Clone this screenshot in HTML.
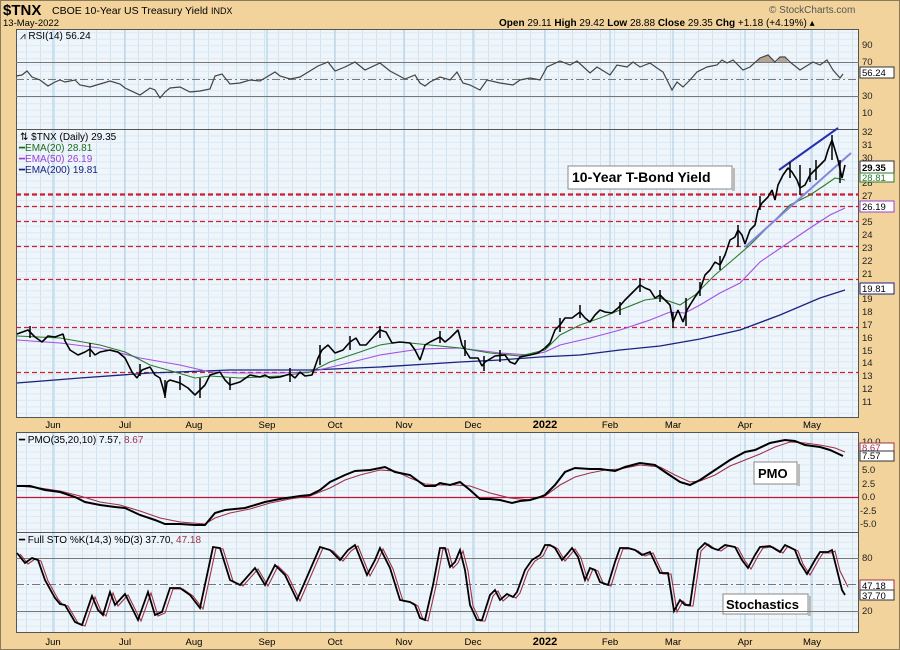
<!DOCTYPE html>
<html><head><meta charset="utf-8"><style>
body{margin:0;background:#f2d39c;width:900px;height:650px;overflow:hidden;font-family:"Liberation Sans",sans-serif}
svg{display:block}
text{font-family:"Liberation Sans",sans-serif}
</style></head><body>
<svg width="900" height="650" viewBox="0 0 900 650" xmlns="http://www.w3.org/2000/svg">
<defs>
<pattern id="g" x="12" y="0" width="14" height="6.45" patternUnits="userSpaceOnUse">
<rect width="14" height="6.45" fill="#eef5fb"/>
<line x1="0.5" y1="0" x2="0.5" y2="6.45" stroke="#d2e3ef" stroke-width="1"/>
<line x1="0" y1="0.5" x2="14" y2="0.5" stroke="#dde9f3" stroke-width="1"/>
</pattern>
</defs>
<rect x="0" y="0" width="900" height="650" fill="#f2d39c"/>
<rect x="0.5" y="0.5" width="899" height="649" fill="none" stroke="#8a7a5a"/>
<rect x="16" y="29" width="843" height="389" fill="url(#g)"/>
<rect x="16" y="432" width="843" height="201" fill="url(#g)"/>
<g stroke="#a9cde2" stroke-width="1">
<path d="M53 29V418M125 29V418M194 29V418M267 29V418M335 29V418M404 29V418M473 29V418M545 29V418M610 29V418M673 29V418M745 29V418M812 29V418"/>
<path d="M53 432V633M125 432V633M194 432V633M267 432V633M335 432V633M404 432V633M473 432V633M545 432V633M610 432V633M673 432V633M745 432V633M812 432V633"/>
</g>
<g fill="none" stroke="#555" stroke-width="1">
<rect x="16.5" y="29.5" width="842" height="388"/>
<line x1="16" y1="129.5" x2="859" y2="129.5"/>
<rect x="16.5" y="432.5" width="842" height="200"/>
<line x1="16" y1="532.5" x2="859" y2="532.5"/>
</g>
<g stroke="#777" stroke-width="1">
<line x1="16" y1="62.5" x2="859" y2="62.5"/>
<line x1="16" y1="96.5" x2="859" y2="96.5"/>
<line x1="16" y1="79.5" x2="859" y2="79.5" stroke-dasharray="8,3,2,3"/>
</g>
<path d="M757,62 L760,58 L768,55 L775,62 Z M777,62 L780,57 L785,57 L788,62 Z" fill="#b5a595"/>
<polyline fill="none" stroke="#444" stroke-width="1.2" points="16,76 22,75 27,71 32,77 40,80 48,86 55,82 60,80 65,82 75,80 80,85 90,87 100,84 110,81 120,84 125,88 140,95 150,88 155,90 160,98 165,92 170,88 180,87 190,92 200,91 210,89 215,76 222,74 230,84 240,83 250,80 260,81 265,78 275,72 280,76 290,79 300,77 318,66 328,62 335,71 345,67 355,62 365,70 380,63 390,71 405,79 415,75 420,83 425,86 430,82 440,77 450,80 457,72 463,83 470,85 480,90 487,80 500,83 513,85 520,80 530,78 540,80 547,67 560,61 570,65 577,61 590,73 597,67 610,75 617,65 627,67 633,62 640,67 650,63 657,68 663,72 672,90 677,82 683,87 690,80 697,72 707,67 717,65 722,60 727,63 733,60 743,70 750,67 760,58 768,55 775,62 780,57 785,57 790,62 800,70 813,62 820,65 827,60 833,70 840,78 843,74"/>
<g stroke="#cc1f2f" stroke-width="1.2" stroke-dasharray="5,3" fill="none">
<line x1="16" y1="194.5" x2="859" y2="194.5" stroke-width="2.2"/>
<line x1="16" y1="206.5" x2="859" y2="206.5"/>
<line x1="16" y1="221.5" x2="859" y2="221.5"/>
<line x1="16" y1="246.5" x2="859" y2="246.5"/>
<line x1="16" y1="279.5" x2="859" y2="279.5"/>
<line x1="16" y1="327.5" x2="859" y2="327.5"/>
<line x1="16" y1="372.5" x2="859" y2="372.5"/>
</g>
<polyline fill="none" stroke="#1a237e" stroke-width="1.3" points="17,383 80,378 150,373 230,370 310,370 380,367 460,362 500,360 540,357 580,355 620,350 660,346 700,339 740,330 780,315 820,298 845,290"/>
<polyline fill="none" stroke="#a64fe0" stroke-width="1.1" points="17,340 60,343 100,348 140,358 180,365 210,372 240,373 280,373 310,372 340,365 380,355 420,349 460,348 500,353 530,355 545,352 560,345 590,338 620,330 650,320 670,312 685,313 700,305 720,293 740,283 760,262 785,245 810,228 830,215 845,208"/>
<polyline fill="none" stroke="#2b7a2b" stroke-width="1.1" points="17,336 60,338 100,345 125,352 150,365 175,372 195,378 210,376 240,378 280,376 310,372 330,362 360,352 380,345 400,342 430,345 460,348 490,353 520,356 545,350 560,335 580,325 600,318 620,310 645,300 660,298 680,305 695,295 715,275 735,258 750,245 770,225 790,205 810,195 825,185 835,178 845,180"/>
<line x1="779" y1="170" x2="838" y2="128" stroke="#2830b0" stroke-width="2"/>
<line x1="745" y1="247" x2="851" y2="153" stroke="#8088dd" stroke-width="2"/>
<polyline fill="none" stroke="#000" stroke-width="1.6" stroke-linejoin="bevel" points="17,334 28,330 35,337 42,342 48,336 55,337 63,334 65,341 70,350 78,355 85,352 90,349 95,355 100,352 110,350 118,352 125,358 132,372 137,378 142,370 150,367 155,375 160,378 163,388 165,396 167,382 170,380 180,383 188,388 195,395 200,390 205,385 210,375 220,372 225,380 230,385 240,382 250,375 260,377 265,375 270,378 280,377 290,374 295,378 300,372 305,376 312,375 318,358 322,350 328,345 335,353 343,350 350,342 356,338 360,345 366,345 375,335 380,330 386,332 392,343 400,342 410,343 415,350 420,360 425,345 430,342 440,337 445,342 450,338 458,330 462,345 465,350 470,358 478,358 482,366 485,362 495,356 505,355 510,362 515,364 520,357 530,355 538,353 545,348 550,343 555,330 560,325 565,318 572,318 580,312 585,318 590,322 595,315 600,310 605,312 612,313 618,308 625,300 630,295 635,290 640,285 645,288 650,290 655,298 660,295 665,300 670,305 673,322 678,310 683,322 687,310 690,305 695,297 700,290 705,275 710,270 715,262 720,265 725,255 730,240 735,237 738,230 742,235 745,244 750,230 755,225 758,210 762,203 768,197 772,190 775,200 778,185 783,175 788,168 792,172 797,180 800,188 805,185 810,175 815,170 820,165 825,160 828,150 832,140 835,150 838,160 842,178 845,165"/>
<g stroke="#000" stroke-width="1.5">
<path d="M165,380V398M200,378V398M320,345V365M465,340V356M484,356V371M673,312V328M686,298V326M738,225V247M800,165V195M832,135V160M840,160V183M816,160V180M30,326V338M90,343V357M140,364V376M180,376V390M230,378V390M290,368V382M350,336V350M380,326V338M440,331V343M500,350V362M560,318V332M580,305V318M620,302V315M640,278V292M660,290V302M700,282V296M720,256V270M760,196V210M790,162V178M810,168V182"/>
</g>
<rect x="568" y="166" width="164" height="23" fill="#fff" stroke="#888"/>
<rect x="732" y="168" width="3" height="23" fill="#bbb"/>
<text x="572" y="182" font-size="14" font-weight="bold" fill="#000">10-Year T-Bond Yield</text>
<rect x="754" y="462" width="43" height="22" fill="#fff" stroke="#888"/>
<rect x="797" y="464" width="3" height="22" fill="#bbb"/>
<text x="758" y="478" font-size="13" font-weight="bold">PMO</text>
<rect x="723" y="594" width="85" height="20" fill="#fff" stroke="#888"/>
<rect x="808" y="596" width="3" height="20" fill="#bbb"/>
<text x="726" y="609" font-size="13" font-weight="bold">Stochastics</text>
<line x1="16" y1="497.5" x2="859" y2="497.5" stroke="#c0143c" stroke-width="1.2"/>
<polyline fill="none" stroke="#a0304a" stroke-width="1.1" points="17,486 40,488 60,491 80,496 100,502 120,505 140,511 160,518 180,522 205,524 215,518 230,513 250,509 270,503 290,499 310,496 330,488 345,480 360,475 380,470 395,471 410,478 425,484 440,485 455,485 470,486 490,493 510,498 530,500 545,496 560,485 575,477 590,473 605,470 620,469 640,465 660,467 675,475 690,482 700,481 715,475 730,466 745,460 760,454 775,447 790,442 805,443 820,445 835,448 845,452"/>
<polyline fill="none" stroke="#000" stroke-width="2" points="17,486 30,486 45,490 60,492 75,497 85,502 100,505 115,507 125,508 140,515 155,520 165,524 180,524 195,525 205,525 215,513 225,510 245,508 265,502 280,499 300,496 310,495 320,490 330,482 345,475 355,471 370,470 385,467 395,472 410,475 425,486 435,486 440,483 450,485 460,482 470,490 480,499 490,499 500,500 512,503 520,501 530,500 540,497 545,495 555,485 565,472 575,468 590,469 600,469 615,471 625,467 640,463 655,465 665,472 680,482 690,485 700,480 715,470 730,460 745,452 755,450 770,443 785,440 795,441 805,445 820,447 830,450 843,456"/>
<g stroke="#777" stroke-width="1">
<line x1="16" y1="558.5" x2="859" y2="558.5"/>
<line x1="16" y1="611.5" x2="859" y2="611.5"/>
<line x1="16" y1="584.5" x2="859" y2="584.5" stroke-dasharray="8,3,2,3"/>
</g>
<polyline fill="none" stroke="#a0304a" stroke-width="1.1" transform="translate(3,1)" points="17,553 25,563 32,558 38,560 45,580 55,598 60,604 65,605 75,622 82,625 92,596 98,610 103,615 110,592 115,605 125,594 132,608 138,620 148,592 155,615 162,612 170,588 180,588 190,595 200,608 213,547 220,548 230,580 240,585 255,568 265,585 275,565 285,575 297,600 310,570 320,547 330,550 340,560 348,550 355,545 367,575 375,560 380,548 390,568 400,600 410,602 415,605 420,618 425,620 433,585 440,548 445,548 450,567 455,562 460,550 465,570 470,605 477,620 482,620 490,595 495,590 500,600 507,594 513,597 517,592 525,570 532,560 540,555 545,545 550,545 555,548 562,560 568,553 572,548 578,557 585,580 590,568 595,570 600,582 608,585 615,562 620,548 628,548 635,550 642,555 650,552 660,573 668,573 674,611 680,600 685,605 690,605 698,550 705,543 712,548 718,550 725,545 735,547 742,560 748,568 755,555 760,547 770,546 780,552 785,545 795,550 800,563 807,574 815,560 820,552 828,552 832,550 837,570 845,586"/>
<polyline fill="none" stroke="#000" stroke-width="1.8" points="17,553 25,563 32,558 38,560 45,580 55,598 60,604 65,605 75,622 82,625 92,596 98,610 103,615 110,592 115,605 125,594 132,608 138,620 148,592 155,615 162,612 170,588 180,588 190,595 200,608 213,547 220,548 230,580 240,585 255,568 265,585 275,565 285,575 297,600 310,570 320,547 330,550 340,560 348,550 355,545 367,575 375,560 380,548 390,568 400,600 410,602 415,605 420,618 425,620 433,585 440,548 445,548 450,567 455,562 460,550 465,570 470,605 477,620 482,620 490,595 495,590 500,600 507,594 513,597 517,592 525,570 532,560 540,555 545,545 550,545 555,548 562,560 568,553 572,548 578,557 585,580 590,568 595,570 600,582 608,585 615,562 620,548 628,548 635,550 642,555 650,552 660,573 668,573 674,611 680,600 685,605 690,605 698,550 705,543 712,548 718,550 725,545 735,547 742,560 748,568 755,555 760,547 770,546 780,552 785,545 795,550 800,563 807,574 815,560 820,552 828,552 832,550 837,570 842,590 845,595"/>
<text x="3" y="15" font-size="15" font-weight="bold">$TNX</text>
<text x="52" y="14" font-size="10.5">CBOE 10-Year US Treasury Yield <tspan font-size="9">INDX</tspan></text>
<text x="3" y="26" font-size="9.5">13-May-2022</text>
<text x="769" y="13" font-size="10" fill="#555">© StockCharts.com</text>
<text x="499" y="26" font-size="10"><tspan font-weight="bold">Open</tspan> 29.11 <tspan font-weight="bold">High</tspan> 29.42 <tspan font-weight="bold">Low</tspan> 28.88 <tspan font-weight="bold">Close</tspan> 29.35 <tspan font-weight="bold">Chg</tspan> +1.18 (+4.19%) ▴</text>
<g font-family="Liberation Mono" font-size="10">
<text x="20" y="39" font-family="DejaVu Sans Mono, monospace">⩘ RSI(14) 56.24</text>
<text x="20" y="140">⇅ $TNX (Daily) 29.35</text>
<text x="19" y="151" fill="#1d6b1d">━EMA(20) 28.81</text>
<text x="19" y="162" fill="#9a40d0">━EMA(50) 26.19</text>
<text x="19" y="173" fill="#1a237e">━EMA(200) 19.81</text>
<text x="19" y="443">━ PMO(35,20,10) 7.57, <tspan fill="#a0304a">8.67</tspan></text>
<text x="19" y="543">━ Full STO %K(14,3) %D(3) 37.70, <tspan fill="#a0304a">47.18</tspan></text>
</g>
<g font-size="9.5" fill="#222">
<text x="862" y="48">90</text><text x="862" y="65">70</text><text x="862" y="99">30</text><text x="862" y="116">10</text>
<text x="862" y="135">32</text><text x="862" y="148">31</text><text x="862" y="161">30</text><text x="862" y="186">28</text><text x="862" y="199">27</text><text x="862" y="225">25</text><text x="862" y="238">24</text><text x="862" y="251">23</text><text x="862" y="264">22</text><text x="862" y="277">21</text><text x="862" y="302">19</text><text x="862" y="315">18</text><text x="862" y="328">17</text><text x="862" y="341">16</text><text x="862" y="354">15</text><text x="862" y="366">14</text><text x="862" y="379">13</text><text x="862" y="392">12</text><text x="862" y="405">11</text>
<text x="862" y="445">10.0</text><text x="862" y="473">5.0</text><text x="862" y="487">2.5</text><text x="862" y="500">0.0</text><text x="860" y="514">-2.5</text><text x="860" y="527">-5.0</text>
<text x="862" y="561">80</text><text x="862" y="614">20</text>
</g>
<g font-size="9.5">
<rect x="860" y="67" width="34" height="11" fill="#fff" stroke="#333"/><text x="862" y="76">56.24</text>
<rect x="860" y="161" width="34" height="12" fill="#fff" stroke="#333"/><text x="862" y="171" font-weight="bold">29.35</text>
<rect x="860" y="173" width="34" height="9" fill="#fff" stroke="#2b7a2b"/><text x="862" y="181" fill="#2b7a2b">28.81</text>
<rect x="860" y="201" width="34" height="11" fill="#fff" stroke="#9a40d0"/><text x="862" y="210">26.19</text>
<rect x="860" y="283" width="34" height="11" fill="#fff" stroke="#1a237e"/><text x="862" y="292">19.81</text>
<rect x="860" y="443" width="34" height="9" fill="#fff" stroke="#a0304a"/><text x="862" y="451" fill="#a0304a">8.67</text>
<rect x="860" y="451" width="34" height="10" fill="#fff" stroke="#333"/><text x="862" y="459">7.57</text>
<rect x="860" y="580" width="34" height="10" fill="#fff" stroke="#a0304a"/><text x="862" y="589">47.18</text>
<rect x="860" y="590" width="34" height="10" fill="#fff" stroke="#333"/><text x="862" y="599">37.70</text>
</g>
<g font-size="9.5" text-anchor="middle">
<text x="53" y="428">Jun</text><text x="125" y="428">Jul</text><text x="194" y="428">Aug</text><text x="267" y="428">Sep</text><text x="335" y="428">Oct</text><text x="404" y="428">Nov</text><text x="473" y="428">Dec</text><text x="545" y="428" font-weight="bold" font-size="11">2022</text><text x="610" y="428">Feb</text><text x="673" y="428">Mar</text><text x="745" y="428">Apr</text><text x="812" y="428">May</text>
<text x="53" y="645">Jun</text><text x="125" y="645">Jul</text><text x="194" y="645">Aug</text><text x="267" y="645">Sep</text><text x="335" y="645">Oct</text><text x="404" y="645">Nov</text><text x="473" y="645">Dec</text><text x="545" y="645" font-weight="bold" font-size="11">2022</text><text x="610" y="645">Feb</text><text x="673" y="645">Mar</text><text x="745" y="645">Apr</text><text x="812" y="645">May</text>
</g>
</svg>
</body></html>
